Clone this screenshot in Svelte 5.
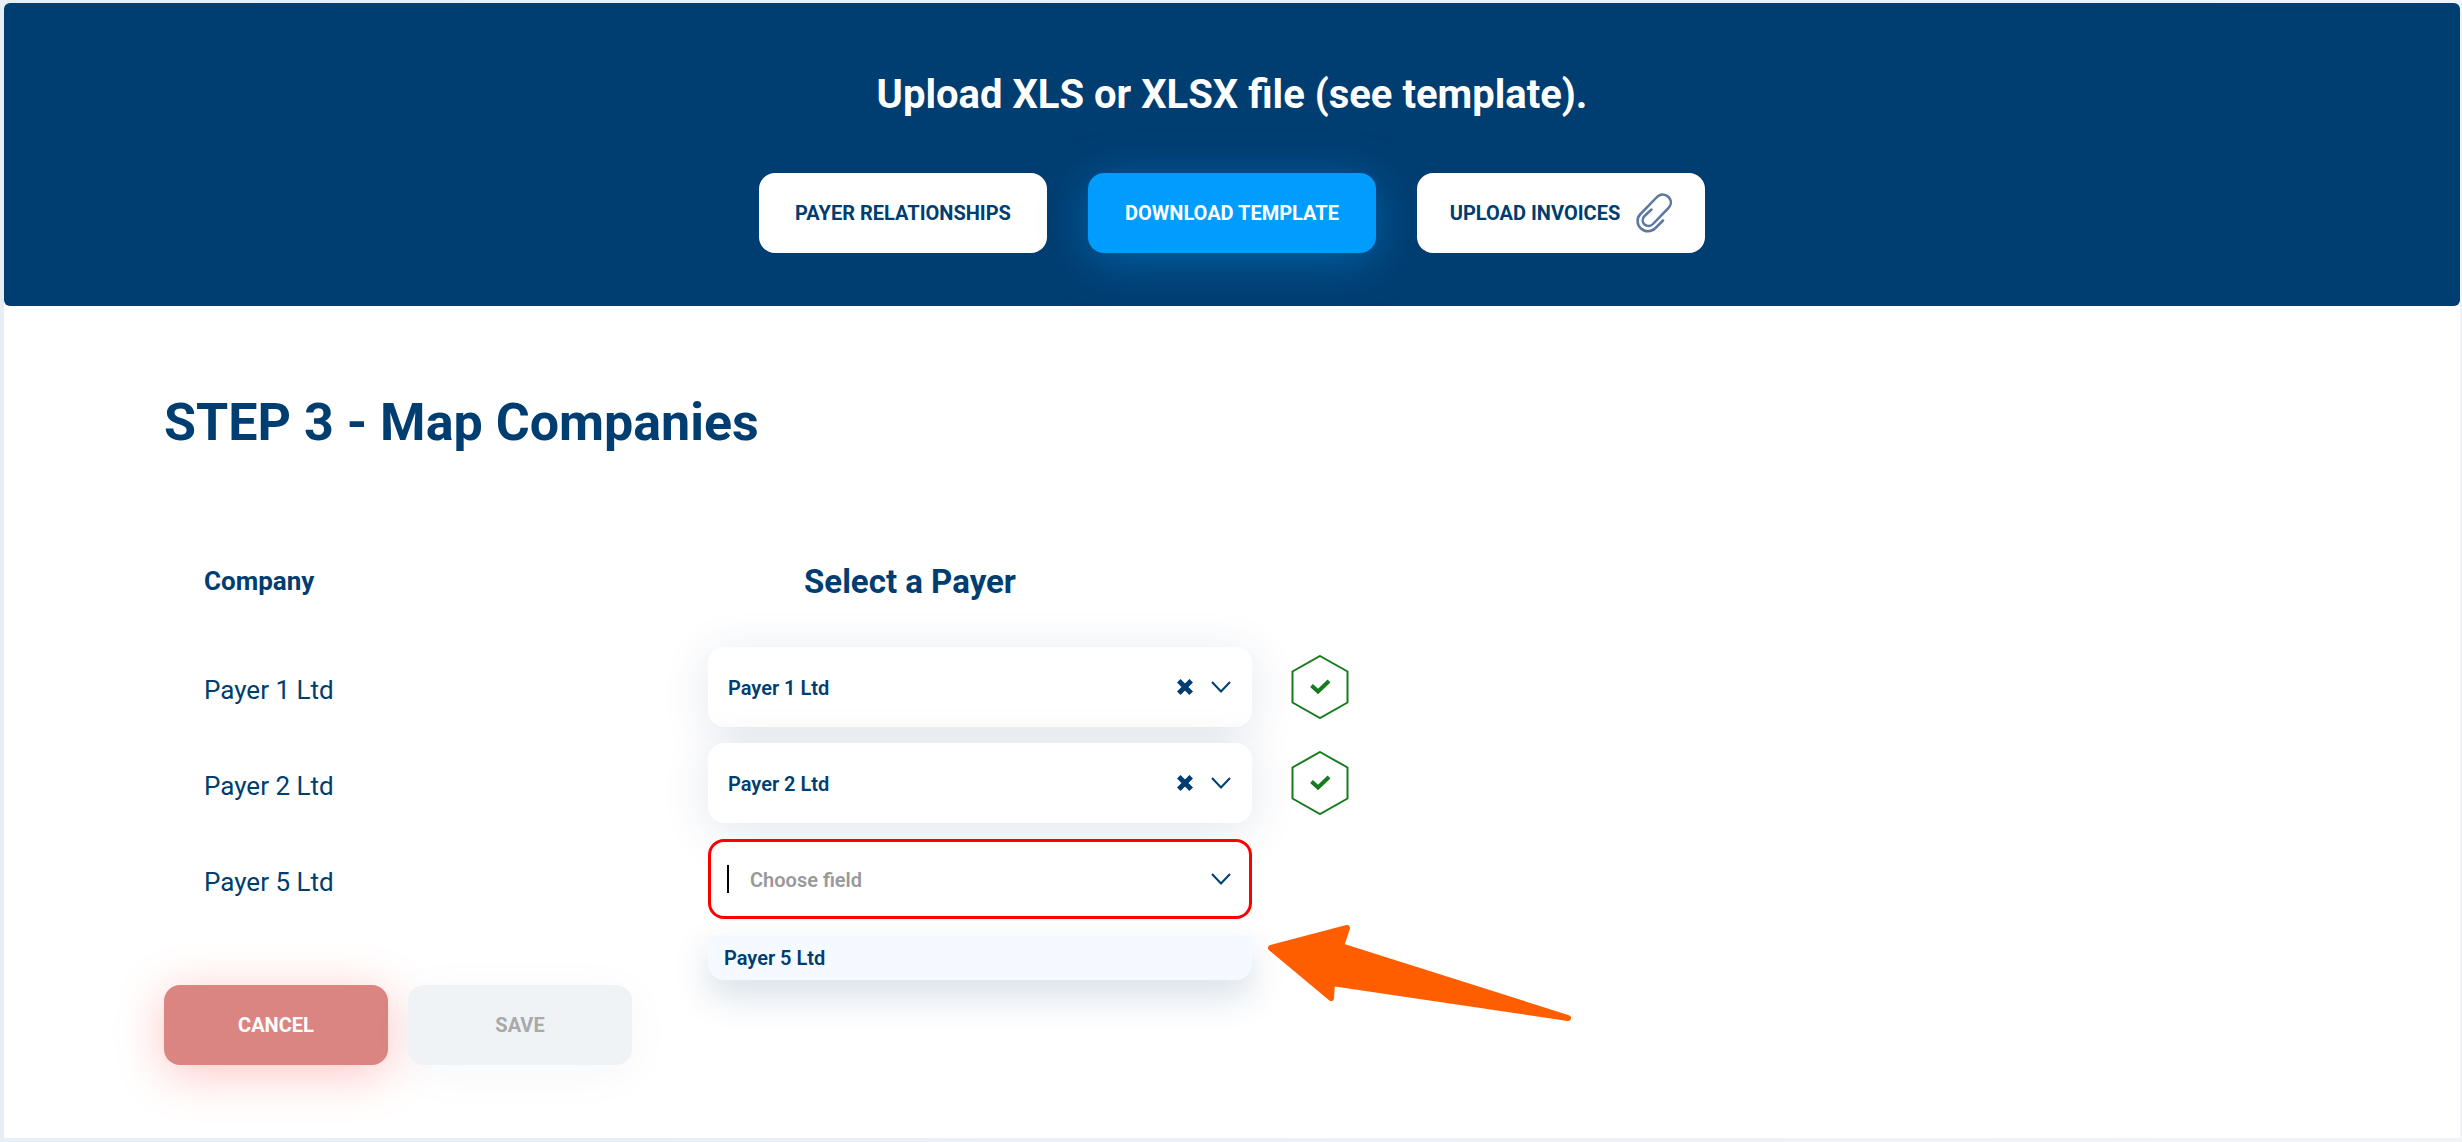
<script lang="ts">
	let rows = $state([
		{ id: 'payer-1', company: 'Payer 1 Ltd', payer: 'Payer 1 Ltd' },
		{ id: 'payer-2', company: 'Payer 2 Ltd', payer: 'Payer 2 Ltd' },
		{ id: 'payer-5', company: 'Payer 5 Ltd', payer: '' }
	]);

	const options = ['Payer 5 Ltd'];

	let complete = $derived(rows.every((row) => row.payer));
</script>

<div class="page">
	<header>
		<h2>Upload XLS or XLSX file (see template).</h2>
		<div class="actions">
			<button class="btn">PAYER RELATIONSHIPS</button>
			<button class="btn primary">DOWNLOAD TEMPLATE</button>
			<button class="btn">
				UPLOAD INVOICES
				<svg class="clip" viewBox="0 0 36 40" aria-hidden="true">
					<path d="M27 27.500L19.500 35C15.500 39 9 39.500 5 35.500C0.500 31.500 0.500 25 4.500 21L20.500 4.500C24 0.500 29 0.500 32.500 4C36 7.500 35.500 12 32 15.500L17 31C14.500 33.500 11 33.500 8.500 31.500C6 29 6 25.500 8.500 23L15.500 16.500" />
				</svg>
			</button>
		</div>
	</header>

	<main>
		<h1>STEP 3 - Map Companies</h1>

		<table>
			<thead>
				<tr>
					<th class="company">Company</th>
					<th class="payer">Select a Payer</th>
					<td class="status"></td>
				</tr>
			</thead>
			<tbody>
				{#each rows as row}
					<tr>
						<td class="company"><label for={row.id}>{row.company}</label></td>
						<td class="payer">
							<div class="select" class:open={!row.payer}>
								{#if !row.payer}
									<span class="caret"></span>
								{/if}
								<input
									id={row.id}
									type="text"
									role="combobox"
									aria-expanded={!row.payer}
									aria-controls="{row.id}-menu"
									placeholder="Choose field"
									bind:value={row.payer}
								/>
								{#if row.payer}
									<button class="icon" aria-label="Clear" onclick={() => (row.payer = '')}>
										<svg width="16" height="16" viewBox="0 0 16 16">
											<path class="cross" d="M1.800 1.800L14.200 14.200M14.200 1.800L1.800 14.200" />
										</svg>
									</button>
								{/if}
								<button class="icon" aria-label="Open">
									<svg width="20" height="12" viewBox="0 0 20 12">
										<path class="chevron" d="M1 1L10 10.500L19 1" />
									</svg>
								</button>
								{#if !row.payer}
									<ul class="menu" id="{row.id}-menu" role="listbox">
										{#each options as option}
											<li role="option" aria-selected="false">{option}</li>
										{/each}
									</ul>
									<svg class="arrow" width="308" height="100" viewBox="0 0 308 100" aria-hidden="true">
										<path d="M5 24L81 4L75 22L302 94L66 59L65 74Z" />
									</svg>
								{/if}
							</div>
						</td>
						<td class="status">
							{#if row.payer}
								<svg width="58" height="64" viewBox="0 0 58 64" role="img" aria-label="Mapped">
									<path class="hexagon" d="M29 1L56.500 16.500V47.500L29 63L1.500 47.500V16.500Z" />
									<path class="tick" d="M20.500 30.500L27 36.500L38 26" />
								</svg>
							{/if}
						</td>
					</tr>
				{/each}
			</tbody>
		</table>

		<div class="footer">
			<button class="btn cancel">CANCEL</button>
			<button class="btn save" disabled={!complete}>SAVE</button>
		</div>
	</main>
</div>

<style>
	:global(body) {
		background: linear-gradient(to right, #e6eef6, #f1f3f7);
	}

	.page {
		margin: 3px 2px 4px 4px;
		background: #fff;
		color: #003d70;
		font-family: Roboto, 'Liberation Sans', sans-serif;
		border-radius: 6px 6px 0 0;
	}

	header {
		padding: 64px 40px 53px;
		background: #003d70;
		border-radius: 6px;
		text-align: center;
	}

	h2 {
		margin: 0 0 50px;
		color: #fff;
		font-size: 40px;
		line-height: 56px;
	}

	.actions {
		display: flex;
		justify-content: center;
		gap: 41px;
	}

	button {
		border: 0;
		padding: 0;
		color: inherit;
		font-family: inherit;
		cursor: pointer;
	}

	.btn {
		display: flex;
		align-items: center;
		justify-content: center;
		gap: 16px;
		box-sizing: border-box;
		width: 288px;
		height: 80px;
		border-radius: 16px;
		background: #fff;
		font-size: 20px;
		font-weight: 700;
		white-space: nowrap;
	}

	.primary {
		background: #009dff;
		color: #fff;
		box-shadow: 0 8px 48px rgba(0, 157, 255, 0.4);
	}

	.clip {
		width: 36px;
		height: 40px;
		fill: none;
		stroke: #5b78a3;
		stroke-width: 2.5;
		stroke-linecap: round;
	}

	main {
		padding: 85px 160px 73px;
	}

	h1 {
		margin: 0 0 68px;
		font-size: 52px;
		line-height: 64px;
	}

	table {
		border-collapse: collapse;
		table-layout: fixed;
		width: 1272px;
		max-width: 100%;
	}

	tr {
		height: 96px;
	}

	thead tr {
		height: 116px;
	}

	th,
	td {
		box-sizing: border-box;
		padding: 0;
		text-align: left;
		font-size: 26px;
	}

	.company {
		width: 544px;
		padding-left: 40px;
	}

	tbody .company {
		padding-top: 6px;
	}

	.payer {
		width: 544px;
	}

	th.payer {
		padding-left: 96px;
		font-size: 33px;
	}

	.status {
		padding-left: 39px;
	}

	.status svg {
		display: block;
		fill: none;
	}

	.select {
		position: relative;
		display: flex;
		align-items: center;
		gap: 18px;
		box-sizing: border-box;
		height: 80px;
		padding: 0 21px 0 20px;
		border-radius: 16px;
		background: #fff;
		box-shadow: 0 8px 48px rgba(0, 61, 112, 0.12);
	}

	.open {
		gap: 21px;
		padding: 0 18px 0 16px;
		border: 3px solid #f00;
		box-shadow: none;
	}

	input {
		flex: 1;
		box-sizing: border-box;
		min-width: 0;
		height: 28px;
		padding: 2px 0 0;
		border: 0;
		outline: 0;
		background: none;
		color: inherit;
		font-family: inherit;
		font-size: 20px;
		font-weight: 600;
		line-height: 20px;
	}

	input::placeholder {
		color: #999;
		opacity: 1;
	}

	.caret {
		width: 2px;
		height: 28px;
		background: #000;
	}

	.icon {
		display: flex;
		background: none;
	}

	.icon svg {
		fill: none;
		stroke: #003d70;
		overflow: visible;
	}

	.cross {
		stroke-width: 5;
	}

	.chevron {
		stroke-width: 2;
	}

	.menu {
		position: absolute;
		top: 93px;
		left: -3px;
		right: -3px;
		margin: 0;
		padding: 0;
		overflow: hidden;
		list-style: none;
		border-radius: 0 0 16px 16px;
		background: #f4faff;
		box-shadow: 0 16px 36px rgba(0, 61, 112, 0.16);
	}

	li {
		padding: 1px 16px 0;
		font-size: 20px;
		font-weight: 600;
		line-height: 44px;
	}

	.arrow {
		position: absolute;
		top: 82px;
		left: 555px;
	}

	.arrow path {
		fill: #ff5e00;
		stroke: #ff5e00;
		stroke-width: 6;
		stroke-linejoin: round;
	}

	.hexagon {
		stroke: #167a1e;
		stroke-width: 2;
	}

	.tick {
		stroke: #167a1e;
		stroke-width: 4;
	}

	.footer {
		display: flex;
		gap: 20px;
		margin-top: 58px;
	}

	.footer .btn {
		width: 224px;
	}

	.cancel {
		background: #db8583;
		color: #fff;
		box-shadow: 0 8px 48px rgba(255, 60, 50, 0.3);
	}

	.save {
		background: #eff3f6;
		color: #a9a9a9;
		box-shadow: 0 8px 48px rgba(0, 61, 112, 0.04);
		cursor: default;
	}
</style>
